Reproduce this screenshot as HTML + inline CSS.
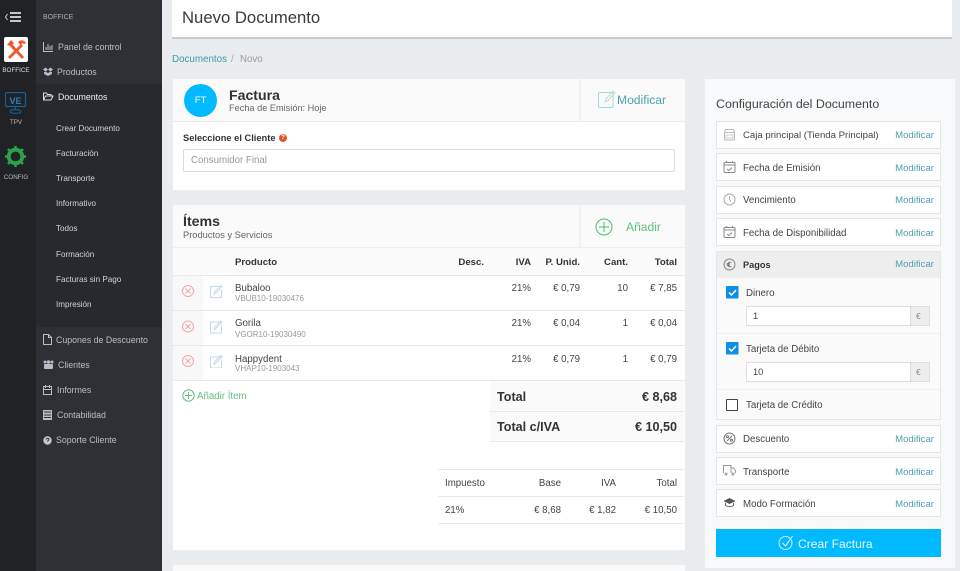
<!DOCTYPE html>
<html lang="es"><head><meta charset="utf-8"><title>Nuevo Documento</title>
<style>
html,body{margin:0;padding:0}
body{width:960px;height:571px;overflow:hidden;position:relative;background:#e9edf0;font-family:"Liberation Sans",sans-serif;color:#444;filter:blur(.3px)}
.b,.t,svg{position:absolute}
.t{white-space:nowrap;line-height:14px;font-size:9.700px;margin-top:1px}
.r{text-align:right}
.bd{font-weight:bold;color:#333}
.n{color:#b9bdc9;font-size:8.800px;line-height:14px}
.s{color:#d0d3dc;font-size:8.100px;line-height:14px}
.m{color:#4ba3ae;font-size:9.600px}
.g{color:#999;font-size:8px}
.h{font-size:9.600px}
.big{font-size:12.600px}
.l{background:#e8e8e8;height:1px}
.it{position:absolute;left:716px;width:223px;background:#fff;border:1px solid #e6e6e6}
svg{fill:none}
</style></head><body>
<!-- sidebar -->
<div class="b" style="left:0;top:0;width:36px;height:571px;background:#212226"></div>
<div class="b" style="left:36px;top:0;width:126px;height:571px;background:#2f3036"></div>
<div class="b" style="left:36px;top:84px;width:126px;height:243px;background:#28292e"></div>
<svg style="left:4px;top:11px" width="20" height="12"><path d="M3.500 3L1.500 6l2 3" stroke="#ccc"/><path d="M6 2h11M6 6h11M6 10h11" stroke="#ddd" stroke-width="1.800"/></svg>
<div class="b" style="left:4px;top:37px;width:24px;height:25px;background:#fff;border-radius:2px"></div>
<svg style="left:4px;top:37px" width="24" height="25"><path d="M6 7l13 14M18 8L5 21" stroke="#f0582a" stroke-width="2.800"/><path d="M3 8l4-5 3 3-3 3z" fill="#f0582a"/><path d="M14 5c3-3 6-2 8 1l-2 1-2-1-1 3z" fill="#f0582a"/></svg>
<div class="t" style="left:0;width:32px;text-align:center;top:63px;font-size:6.300px;color:#ddd">BOFFICE</div>
<svg style="left:5px;top:92px" width="22" height="24"><rect x=".5" y=".5" width="20" height="14" rx="1.500" stroke="#1d5f94" stroke-width="1.200"/><path d="M10.500 15v2.500M5 19.500c0-2.500 11-2.500 11 0s-11 2.500-11 0z" stroke="#1d5f94"/></svg>
<div class="t" style="left:5px;width:21px;text-align:center;top:93px;font-size:9px;font-weight:bold;color:#2a7fc0">VE</div>
<div class="t" style="left:0;width:32px;text-align:center;top:115px;font-size:6.300px;color:#bbb">TPV</div>
<svg style="left:5px;top:146px" width="22" height="22"><circle cx="10.500" cy="10.500" r="6.800" stroke="#2aa44a" stroke-width="3.800"/><path d="M10.500 0v2.500M10.500 18.500v2.500M0 10.500h2.500M18.500 10.500h2.500M3 3l2 2M18 3l-2 2M3 18l2-2M18 18l-2-2" stroke="#2aa44a" stroke-width="2.500"/></svg>
<div class="t" style="left:0;width:32px;text-align:center;top:170px;font-size:6.300px;color:#bbb">CONFIG</div>
<div class="t s" style="left:43px;top:10px;font-size:7px;color:#aab">BOFFICE</div>
<svg style="left:43px;top:42px" width="11" height="10"><path d="M.5 0v9.500H10M3 8V5M5 8V2M7 8V4M9 8V3" stroke="#b9bdc9"/></svg>
<div class="t n" style="left:58px;top:39px">Panel de control</div>
<svg style="left:43px;top:67px" width="10" height="9"><path d="M0 2.500L2.500 .5 5 2.500 2.500 4.500zM5 2.500L7.500 .5 10 2.500 7.500 4.500zM1 5.500l1.500-1L5 6l2.500-1.500 1.500 1V7L5 9 1 7z" fill="#b9bdc9"/></svg>
<div class="t n" style="left:57px;top:64px">Productos</div>
<svg style="left:43px;top:92px" width="11" height="9"><path d="M.5 8V1h3l1 1.500H8V4M.5 8l2-4H10L8 8z" stroke="#ddd"/></svg>
<div class="t n" style="left:58px;top:89px;color:#eee">Documentos</div>
<div class="t s" style="left:56px;top:121px">Crear Documento</div>
<div class="t s" style="left:56px;top:146px">Facturación</div>
<div class="t s" style="left:56px;top:171px">Transporte</div>
<div class="t s" style="left:56px;top:196px">Informativo</div>
<div class="t s" style="left:56px;top:221px">Todos</div>
<div class="t s" style="left:56px;top:247px">Formación</div>
<div class="t s" style="left:56px;top:272px">Facturas sin Pago</div>
<div class="t s" style="left:56px;top:297px">Impresión</div>
<svg style="left:43px;top:334px" width="9" height="11"><path d="M.5.500h5l3 3v7h-8zM5.500.500v3h3" stroke="#b9bdc9"/></svg>
<div class="t n" style="left:56px;top:332px">Cupones de Descuento</div>
<svg style="left:43px;top:360px" width="11" height="9"><circle cx="2" cy="2" r="1.500" fill="#b9bdc9"/><circle cx="5.500" cy="2" r="1.800" fill="#b9bdc9"/><circle cx="9" cy="2" r="1.500" fill="#b9bdc9"/><rect x="1" y="4" width="9" height="5" rx="1" fill="#b9bdc9"/></svg>
<div class="t n" style="left:58px;top:357px">Clientes</div>
<svg style="left:43px;top:385px" width="9" height="10"><rect x=".5" y="1.500" width="8" height="8" stroke="#b9bdc9"/><path d="M2.500 0v3M6.500 0v3M1 4.500h7" stroke="#b9bdc9"/></svg>
<div class="t n" style="left:57px;top:382px">Informes</div>
<svg style="left:43px;top:410px" width="9" height="10"><rect width="9" height="10" fill="#b9bdc9"/><path d="M1 2h7M1 5h7M1 7.500h7" stroke="#333"/></svg>
<div class="t n" style="left:57px;top:407px">Contabilidad</div>
<svg style="left:43px;top:436px" width="9" height="9"><circle cx="4.500" cy="4.500" r="4.200" fill="#c5c8d0"/><path d="M3 3.500c.5-1.500 3-1.500 3 0 0 1-1.500 1-1.500 2" stroke="#333"/></svg>
<div class="t n" style="left:56px;top:432px">Soporte Cliente</div>
<!-- header -->
<div class="b" style="left:172px;top:0;width:780px;height:37px;background:#fff;border-bottom:2px solid #ccc"></div>
<div class="t" style="left:182px;top:7px;font-size:16.700px;line-height:20px;color:#3a3a3a">Nuevo Documento</div>
<div class="t" style="left:172px;top:52px;font-size:9.800px;color:#3d99a8">Documentos</div>
<div class="t" style="left:231px;top:52px;font-size:9.700px;color:#aaa">/</div>
<div class="t" style="left:240px;top:52px;font-size:9.700px;color:#999">Novo</div>
<!-- card 1 -->
<div class="b" style="left:173px;top:79px;width:512px;height:111px;background:#fff"></div>
<div class="b" style="left:173px;top:79px;width:512px;height:42px;background:#fafafa;border-bottom:1px solid #eaeaea"></div>
<div class="b" style="left:579px;top:79px;width:2px;height:42px;background:#f0f0f0"></div>
<div class="b" style="left:184px;top:84px;width:33px;height:33px;border-radius:50%;background:#00b9ff"></div>
<div class="t" style="left:184px;width:33px;text-align:center;top:93px;font-size:9.500px;color:#fff">FT</div>
<div class="t bd" style="left:229px;top:87px;font-size:14.100px">Factura</div>
<div class="t" style="left:229px;top:100px;font-size:9.200px;color:#666">Fecha de Emisión: Hoje</div>
<svg style="left:598px;top:90px" width="19" height="19"><rect x=".5" y="2.500" width="14.500" height="15" rx="1.500" stroke="#a8d8de"/><path d="M7 12l1-3 7-8 2 1.500-7 8z" stroke="#c5d5d8"/></svg>
<div class="t" style="left:617px;top:92px;font-size:12.100px;color:#4ba3ae">Modificar</div>
<div class="t bd" style="left:183px;top:130px;font-size:9.300px">Seleccione el Cliente</div>
<div class="b" style="left:279px;top:134px;width:8px;height:8px;border-radius:50%;background:#e0562a"></div>
<div class="t" style="left:279px;width:8px;text-align:center;top:130px;font-size:6.500px;font-weight:bold;color:#fff">?</div>
<div class="b" style="left:183px;top:149px;width:490px;height:21px;background:#fff;border:1px solid #ddd;border-radius:2px"></div>
<div class="t" style="left:191px;top:153px;color:#999">Consumidor Final</div>
<!-- card 2 -->
<div class="b" style="left:173px;top:205px;width:512px;height:345px;background:#fff"></div>
<div class="b" style="left:173px;top:205px;width:512px;height:42px;background:#fafafa;border-bottom:1px solid #eee"></div>
<div class="b" style="left:579px;top:205px;width:2px;height:42px;background:#f0f0f0"></div>
<div class="t bd" style="left:183px;top:214px;font-size:14.200px">Ítems</div>
<div class="t" style="left:183px;top:227px;font-size:9.300px;color:#666">Productos y Servicios</div>
<svg style="left:595px;top:218px" width="18" height="18"><circle cx="9" cy="9" r="8" stroke="#4cbb72"/><path d="M9 4v10M4 9h10" stroke="#4cbb72"/></svg>
<div class="t" style="left:626px;top:219px;font-size:12.100px;color:#63c07e">Añadir</div>
<div class="b" style="left:173px;top:248px;width:512px;height:27px;background:#fbfbfb;border-bottom:1px solid #e8e8e8"></div>
<div class="t bd h" style="left:235px;top:255px">Producto</div>
<div class="t bd r h" style="left:434px;width:50px;top:255px">Desc.</div>
<div class="t bd r h" style="left:490px;width:41px;top:255px">IVA</div>
<div class="t bd r h" style="left:530px;width:50px;top:255px">P. Unid.</div>
<div class="t bd r h" style="left:590px;width:38px;top:255px">Cant.</div>
<div class="t bd r h" style="left:640px;width:37px;top:255px">Total</div>
<div class="b" style="left:173px;top:276px;width:30px;height:104px;background:#f8f8f8"></div>
<div class="b l" style="left:173px;top:310px;width:512px"></div>
<div class="b l" style="left:173px;top:345px;width:512px"></div>
<div class="b l" style="left:173px;top:380px;width:512px"></div>
<svg style="left:181px;top:284px" width="14" height="84"><g stroke="#f3a6ab"><circle cx="7" cy="7" r="5.500"/><path d="M4.500 4.500l5 5M9.500 4.500l-5 5"/><circle cx="7" cy="42.500" r="5.500"/><path d="M4.500 40l5 5M9.500 40l-5 5"/><circle cx="7" cy="77" r="5.500"/><path d="M4.500 74.500l5 5M9.500 74.500l-5 5"/></g></svg>
<svg style="left:209px;top:284px" width="16" height="84"><g stroke="#c4d8ec"><path d="M12 2.500H1.500v11h11V6"/><path d="M5 10l1-2.500 5.500-6 1.500 1-5.500 6z"/><path d="M12 38H1.500v11h11v-7.500"/><path d="M5 45.500l1-2.500 5.500-6 1.500 1-5.500 6z"/><path d="M12 73H1.500v11h11v-7.500"/><path d="M5 80l1-2.500 5.500-6 1.500 1-5.500 6z"/></g></svg>
<div class="t" style="left:235px;top:281px">Bubaloo</div>
<div class="t g" style="left:235px;top:291px">VBUB10-19030476</div>
<div class="t r" style="left:490px;width:41px;top:281px">21%</div>
<div class="t r" style="left:530px;width:50px;top:281px">€ 0,79</div>
<div class="t r" style="left:590px;width:38px;top:281px">10</div>
<div class="t r" style="left:630px;width:47px;top:281px">€ 7,85</div>
<div class="t" style="left:235px;top:316px">Gorila</div>
<div class="t g" style="left:235px;top:327px">VGOR10-19030490</div>
<div class="t r" style="left:490px;width:41px;top:316px">21%</div>
<div class="t r" style="left:530px;width:50px;top:316px">€ 0,04</div>
<div class="t r" style="left:590px;width:38px;top:316px">1</div>
<div class="t r" style="left:630px;width:47px;top:316px">€ 0,04</div>
<div class="t" style="left:235px;top:352px">Happydent</div>
<div class="t g" style="left:235px;top:361px">VHAP10-1903043</div>
<div class="t r" style="left:490px;width:41px;top:352px">21%</div>
<div class="t r" style="left:530px;width:50px;top:352px">€ 0,79</div>
<div class="t r" style="left:590px;width:38px;top:352px">1</div>
<div class="t r" style="left:630px;width:47px;top:352px">€ 0,79</div>
<svg style="left:182px;top:389px" width="13" height="13"><circle cx="6.500" cy="6.500" r="5.700" stroke="#63c07e"/><path d="M6.500 3v7M3 6.500h7" stroke="#63c07e"/></svg>
<div class="t" style="left:197px;top:389px;font-size:9.700px;color:#63c07e">Añadir Ítem</div>
<div class="b" style="left:490px;top:381px;width:194px;height:60px;background:#fafafa"></div>
<div class="b l" style="left:490px;top:411px;width:194px"></div>
<div class="b l" style="left:490px;top:441px;width:194px"></div>
<div class="t bd big" style="left:497px;top:389px">Total</div>
<div class="t bd r big" style="left:620px;width:57px;top:389px">€ 8,68</div>
<div class="t bd big" style="left:497px;top:419px">Total c/IVA</div>
<div class="t bd r big" style="left:620px;width:57px;top:419px">€ 10,50</div>
<div class="b l" style="left:438px;top:469px;width:246px"></div>
<div class="b" style="left:438px;top:496px;width:246px;height:1px;background:#eaeaea"></div>
<div class="b" style="left:438px;top:523px;width:246px;height:1px;background:#eaeaea"></div>
<div class="t" style="left:445px;top:476px">Impuesto</div>
<div class="t r" style="left:500px;width:61px;top:476px">Base</div>
<div class="t r" style="left:570px;width:46px;top:476px">IVA</div>
<div class="t r" style="left:630px;width:47px;top:476px">Total</div>
<div class="t" style="left:445px;top:503px">21%</div>
<div class="t r" style="left:500px;width:61px;top:503px">€ 8,68</div>
<div class="t r" style="left:570px;width:46px;top:503px">€ 1,82</div>
<div class="t r" style="left:630px;width:47px;top:503px">€ 10,50</div>
<div class="b" style="left:173px;top:565px;width:512px;height:6px;background:#fafafa"></div>
<!-- right -->
<div class="b" style="left:705px;top:79px;width:250px;height:489px;background:#f8f9fa"></div>
<div class="t" style="left:716px;top:96px;font-size:12.400px;color:#444">Configuración del Documento</div>
<div class="it" style="top:121px;height:26px"></div>
<div class="it" style="top:153px;height:26px"></div>
<div class="it" style="top:186px;height:26px"></div>
<div class="it" style="top:218px;height:26px"></div>
<div class="it" style="top:251px;height:167px;background:#fafafa"></div>
<div class="b" style="left:717px;top:252px;width:223px;height:26px;background:#eee"></div>
<div class="it" style="top:425px;height:26px"></div>
<div class="it" style="top:457px;height:26px"></div>
<div class="it" style="top:489px;height:26px"></div>
<svg style="left:723px;top:128px" width="13" height="13"><path d="M1.500 4.500l1-3h8l1 3zM1.500 5v7h10V5" stroke="#bbb"/><path d="M3 7h7v3H3z" stroke="#ccc"/></svg>
<svg style="left:723px;top:160px" width="13" height="14"><rect x="1" y="2.500" width="11" height="10" rx="1" stroke="#888"/><path d="M1 5h11M3.500 1v2M9.500 1v2M4 9l2 1.500 3-3" stroke="#888"/></svg>
<svg style="left:723px;top:193px" width="13" height="13"><circle cx="6.500" cy="6.500" r="5.500" stroke="#aaa"/><path d="M6.500 3v3.500l1.500 2" stroke="#aaa"/></svg>
<svg style="left:723px;top:225px" width="13" height="14"><rect x="1" y="2.500" width="11" height="10" rx="1" stroke="#888"/><path d="M1 5h11M3.500 1v2M9.500 1v2M4 9l2 1.500 3-3" stroke="#888"/></svg>
<svg style="left:723px;top:258px" width="13" height="13"><circle cx="6.500" cy="6.500" r="5.500" stroke="#888"/><path d="M8.500 4.500c-2-1-3.500 0-3.500 2s1.500 3 3.500 2M3.500 5.800h3.500M3.500 7.200h3.500" stroke="#666" stroke-width=".8"/></svg>
<svg style="left:723px;top:432px" width="13" height="13"><circle cx="6.500" cy="6.500" r="5.500" stroke="#777"/><path d="M4 9l5-5" stroke="#777"/><circle cx="4.500" cy="4.700" r="1" stroke="#777"/><circle cx="8.500" cy="8.300" r="1" stroke="#777"/></svg>
<svg style="left:723px;top:464px" width="13" height="12"><path d="M.5 9V1.500h7.500V9M8 4h2.500l2 2.500V9" stroke="#999"/><circle cx="3" cy="10" r="1" stroke="#999"/><circle cx="10" cy="10" r="1" stroke="#999"/></svg>
<svg style="left:723px;top:497px" width="13" height="11"><path d="M6.500 1L12.500 4 6.500 7 .5 4z" fill="#555"/><path d="M2.500 6v2.500c2 1.500 6 1.500 8 0V6" stroke="#666"/></svg>
<div class="t" style="left:743px;top:128px;font-size:9.600px">Caja principal (Tienda Principal)</div>
<div class="t" style="left:743px;top:161px">Fecha de Emisión</div>
<div class="t" style="left:743px;top:193px">Vencimiento</div>
<div class="t" style="left:743px;top:226px">Fecha de Disponibilidad</div>
<div class="t bd" style="left:743px;top:257px;font-size:9.200px">Pagos</div>
<div class="t" style="left:743px;top:432px">Descuento</div>
<div class="t" style="left:743px;top:465px">Transporte</div>
<div class="t" style="left:743px;top:497px">Modo Formación</div>
<div class="t m r" style="left:870px;width:64px;top:128px">Modificar</div>
<div class="t m r" style="left:870px;width:64px;top:161px">Modificar</div>
<div class="t m r" style="left:870px;width:64px;top:193px">Modificar</div>
<div class="t m r" style="left:870px;width:64px;top:226px">Modificar</div>
<div class="t m r" style="left:870px;width:64px;top:257px">Modificar</div>
<div class="t m r" style="left:870px;width:64px;top:432px">Modificar</div>
<div class="t m r" style="left:870px;width:64px;top:465px">Modificar</div>
<div class="t m r" style="left:870px;width:64px;top:497px">Modificar</div>
<svg style="left:726px;top:286px" width="13" height="13"><rect width="12.500" height="12.500" rx="1" fill="#0b8fe8"/><path d="M3 6.500l2.500 2.500 4.500-5" stroke="#fff" stroke-width="1.500"/></svg>
<div class="t" style="left:746px;top:286px">Dinero</div>
<div class="b" style="left:746px;top:306px;width:163px;height:18px;background:#fff;border:1px solid #ddd;border-radius:2px"></div>
<div class="b" style="left:910px;top:306px;width:18px;height:18px;background:#eee;border:1px solid #ddd"></div>
<div class="t" style="left:753px;top:308px;font-size:9.300px">1</div>
<div class="t" style="left:916px;top:308px;font-size:8.300px;color:#888">€</div>
<div class="b l" style="left:717px;top:333px;width:223px;background:#efefef"></div>
<svg style="left:726px;top:342px" width="13" height="13"><rect width="12.500" height="12.500" rx="1" fill="#0b8fe8"/><path d="M3 6.500l2.500 2.500 4.500-5" stroke="#fff" stroke-width="1.500"/></svg>
<div class="t" style="left:746px;top:342px">Tarjeta de Débito</div>
<div class="b" style="left:746px;top:362px;width:163px;height:18px;background:#fff;border:1px solid #ddd;border-radius:2px"></div>
<div class="b" style="left:910px;top:362px;width:18px;height:18px;background:#eee;border:1px solid #ddd"></div>
<div class="t" style="left:753px;top:364px;font-size:9.300px">10</div>
<div class="t" style="left:916px;top:364px;font-size:8.300px;color:#888">€</div>
<div class="b l" style="left:717px;top:389px;width:223px;background:#efefef"></div>
<div class="b" style="left:726px;top:399px;width:10px;height:10px;border:1.500px solid #444;border-radius:1px;background:#fff"></div>
<div class="t" style="left:746px;top:398px">Tarjeta de Crédito</div>
<div class="b" style="left:716px;top:529px;width:225px;height:28px;background:#00b9ff"></div>
<svg style="left:778px;top:534px" width="16" height="17"><circle cx="7.500" cy="9" r="6.500" stroke="#c8eeff"/><path d="M4.500 9l3 3 7-10" stroke="#e6f8ff"/></svg>
<div class="t" style="left:798px;top:536px;font-size:12.100px;color:#e8f8ff">Crear Factura</div>
</body></html>
